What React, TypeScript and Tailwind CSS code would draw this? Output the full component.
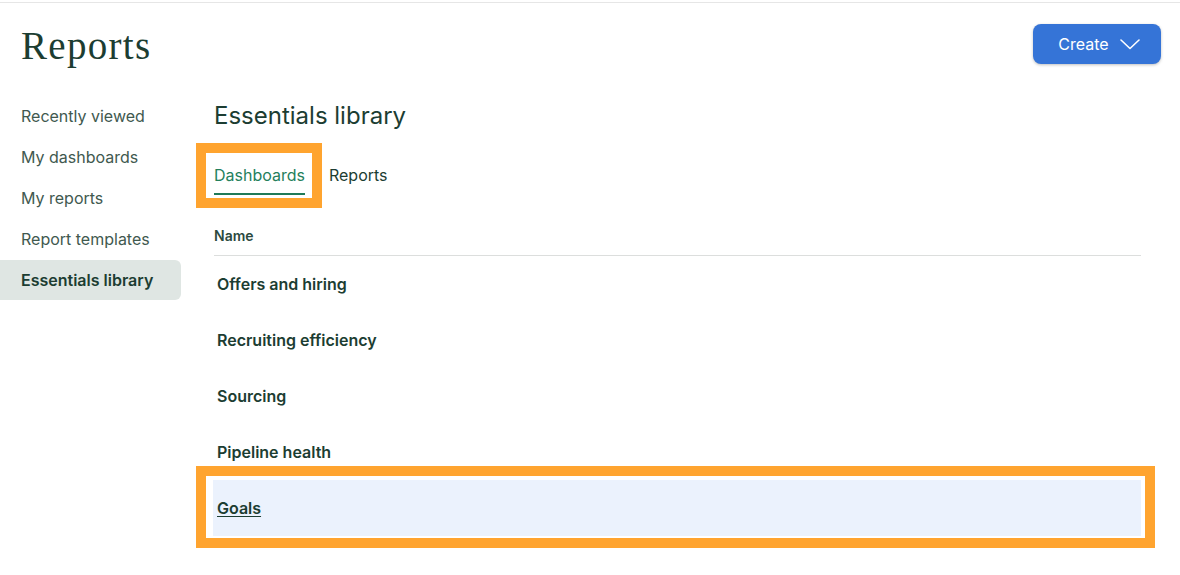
const sideItems = [
  { label: "Recently viewed", active: false },
  { label: "My dashboards", active: false },
  { label: "My reports", active: false },
  { label: "Report templates", active: false },
  { label: "Essentials library", active: true },
];

const rows = [
  "Offers and hiring",
  "Recruiting efficiency",
  "Sourcing",
  "Pipeline health",
  "Goals",
];

export default function App() {
  return (
    <div className="min-h-screen bg-white font-['Inter',sans-serif] text-[#1c3d32]">
      <div className="mt-[2px] border-t border-[#e6e6e6]" />

      {/* Header */}
      <header className="flex items-start justify-between pl-[21px] pr-[19px] pt-[21px]">
        <h1 className="font-['Liberation_Serif',serif] text-[39px] leading-[44px] tracking-[1.3px] text-[#1c3d32]">
          Reports
        </h1>
        <button className="flex h-10 w-32 items-center justify-center gap-[11px] rounded-lg bg-[#3574d7] pl-1 text-[16px] text-white shadow-[0_1px_3px_rgba(0,0,0,0.25)]">
          Create
          <svg width="20" height="11" viewBox="0 0 20 11" fill="none">
            <polyline
              points="1,1 10,9.5 19,1"
              stroke="white"
              strokeWidth="1.6"
              strokeLinecap="round"
              strokeLinejoin="round"
            />
          </svg>
        </button>
      </header>

      <div className="mt-[28px] flex">
        {/* Sidebar */}
        <aside className="flex w-[181px] shrink-0 flex-col gap-px">
          {sideItems.map((item) => (
            <div
              key={item.label}
              className={`flex h-10 items-center pl-[21px] text-[16px] ${
                item.active
                  ? "rounded-r-md bg-[#dfe6e3] font-semibold text-[#1c3d32]"
                  : "text-[#41594f]"
              }`}
            >
              {item.label}
            </div>
          ))}
        </aside>

        {/* Main */}
        <main className="ml-[33px] mr-[39px] flex-1">
          <h2 className="flex h-10 items-center text-[24px] text-[#1c3d32]">
            Essentials library
          </h2>

          <div className="mt-[23px] flex gap-6">
            <div className="relative">
              <div className="border-b-2 border-[#1f7a58] pb-[6px] pt-1 text-[16px] leading-6 text-[#24805c]">
                Dashboards
              </div>
              <div className="pointer-events-none absolute -left-[18px] -right-[17px] -top-[16px] -bottom-[13px] border-[10px] border-[#ffa42f]" />
            </div>
            <div className="pb-2 pt-1 text-[16px] leading-6 text-[#1c3d32]">
              Reports
            </div>
          </div>

          <div className="border-b border-[#dcdedd] pb-[9px] pt-[31px] text-[14px] font-semibold leading-5 text-[#2c4a3f]">
            Name
          </div>

          <div className="relative">
            {rows.map((row) => {
              const selected = row === "Goals";
              return (
                <div
                  key={row}
                  className={`flex h-14 items-center pl-[3px] text-[16px] font-semibold ${
                    selected ? "-ml-px bg-[#ebf2fd] pl-[4px]" : ""
                  }`}
                >
                  <span className={selected ? "underline underline-offset-2" : ""}>
                    {row}
                  </span>
                </div>
              );
            })}
            <div className="pointer-events-none absolute -left-[18px] -right-[14px] bottom-[-12px] h-[82px] border-[10px] border-[#ffa42f]" />
          </div>
        </main>
      </div>
    </div>
  );
}
